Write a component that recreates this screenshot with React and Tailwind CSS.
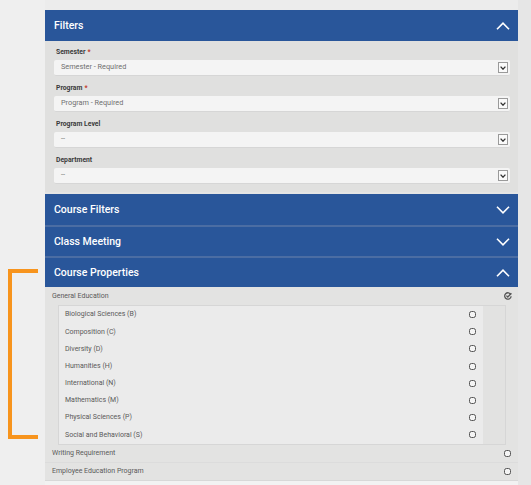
import React from "react";

const font = { fontFamily: "Roboto, 'Liberation Sans', sans-serif" };

function Chevron({ up }) {
  return (
    <svg width="14" height="8" viewBox="0 0 14 8" className="shrink-0">
      <path
        d={up ? "M1 7.2 L7 1.2 L13 7.2" : "M1 0.8 L7 6.8 L13 0.8"}
        fill="none"
        stroke="white"
        strokeWidth="1.6"
      />
    </svg>
  );
}

function Header({ title, up, first }) {
  return (
    <div
      className={
        "h-[31px] flex items-center justify-between pl-[9px] pr-[8px] bg-[#29569a] text-white text-[10.5px] font-medium " +
        (first ? "" : "border-t-2 border-[#4b6da3]")
      }
    >
      <span>{title}</span>
      <Chevron up={up} />
    </div>
  );
}

function SelectBox({ text }) {
  return (
    <div className="h-[16px] ml-[9px] mr-[8px] bg-[#f4f4f4] rounded-[2px] border-b border-[#d6d6d6] flex items-center justify-between pl-[7px] pr-[2px]">
      <span className="text-[7.3px] text-[#707070]">{text}</span>
      <div className="w-[10px] h-[11px] border border-[#9a9a9a] bg-[#fafafa] flex items-center justify-center">
        <svg width="6" height="4" viewBox="0 0 6 4">
          <path d="M0.6 0.6 L3 3.2 L5.4 0.6" fill="none" stroke="#333" strokeWidth="1.3" />
        </svg>
      </div>
    </div>
  );
}

function Label({ text, req, first }) {
  return (
    <div
      className={
        "flex items-center pl-[11px] text-[6.8px] font-bold text-[#3a3a3a] " +
        (first ? "h-[19px] pt-[3px]" : "h-[20px] pt-[4px]")
      }
    >
      {text}
      {req && <span className="text-[#c0392b] ml-[2px]">*</span>}
    </div>
  );
}

function Circle() {
  return (
    <div className="w-[7px] h-[7px] rounded-[2.5px] border-[1.5px] border-[#555] bg-[#f4f4f4]" />
  );
}

const groups = [
  { label: "Semester", req: true, text: "Semester - Required" },
  { label: "Program", req: true, text: "Program - Required" },
  { label: "Program Level", req: false, text: "--" },
  { label: "Department", req: false, text: "--" },
];

const items = [
  "Biological Sciences (B)",
  "Composition (C)",
  "Diversity (D)",
  "Humanities (H)",
  "International (N)",
  "Mathematics (M)",
  "Physical Sciences (P)",
  "Social and Behavioral (S)",
];

export default function App() {
  return (
    <div
      className="relative w-[531px] h-[485px] overflow-hidden bg-[#ececec] flex"
      style={font}
    >
      <div className="w-[45px] shrink-0 bg-[#efefef]" />
      <div className="w-[473px] shrink-0 pt-[10px] flex flex-col">
        <div className="bg-[#e4e4e4] flex flex-col">
          <Header title="Filters" up first />
          <div className="bg-[#e0e0df] pb-[8px]">
            {groups.map((g, i) => (
              <div key={g.label}>
                <Label text={g.label} req={g.req} first={i === 0} />
                <SelectBox text={g.text} />
              </div>
            ))}
          </div>
          <div className="h-[2px] bg-[#e4e4e4]" />
          <Header title="Course Filters" first />
          <Header title="Class Meeting" />
          <Header title="Course Properties" up />
          <div className="bg-[#e3e3e2]">
            <div className="h-[18px] flex items-center justify-between pl-[7px] pr-[6px] text-[7px] text-[#5a5a5a]">
              <span>General Education</span>
              <svg width="8" height="8" viewBox="0 0 8 8">
                <path
                  d="M6.8 2.6 A3.2 3.2 0 1 0 7.1 4.2"
                  fill="none"
                  stroke="#555"
                  strokeWidth="1.3"
                />
                <path d="M2.4 3.6 L3.8 5 L7.4 1.2" fill="none" stroke="#555" strokeWidth="1.3" />
              </svg>
            </div>
            <div className="ml-[13px] mr-[12px] border border-[#d6d6d6] bg-[#ebebeb] flex">
              <div className="flex-1 flex flex-col">
                {items.map((t) => (
                  <div
                    key={t}
                    className="h-[17.2px] flex items-center justify-between pl-[6px] pr-[7px] text-[7px] text-[#5a5a5a]"
                  >
                    <span>{t}</span>
                    <Circle />
                  </div>
                ))}
              </div>
              <div className="w-[22px] bg-[#e2e2e1]" />
            </div>
            <div className="h-[18px] flex items-center justify-between pl-[7px] pr-[7px] text-[7px] text-[#5a5a5a] border-b border-[#dcdcdc]">
              <span>Writing Requirement</span>
              <Circle />
            </div>
            <div className="h-[17px] flex items-center justify-between pl-[7px] pr-[7px] text-[7px] text-[#5a5a5a]">
              <span>Employee Education Program</span>
              <Circle />
            </div>
          </div>
        </div>
        <div className="flex-1 bg-[#f2f2f2] border-t border-[#d8d8d8]" />
      </div>
      <div className="flex-1 bg-[#e6e6e6]" />

      <div className="absolute left-[8px] top-[269px] w-[30px] h-[170px] border-l-4 border-t-4 border-b-4 border-[#f7941d]" />
    </div>
  );
}
